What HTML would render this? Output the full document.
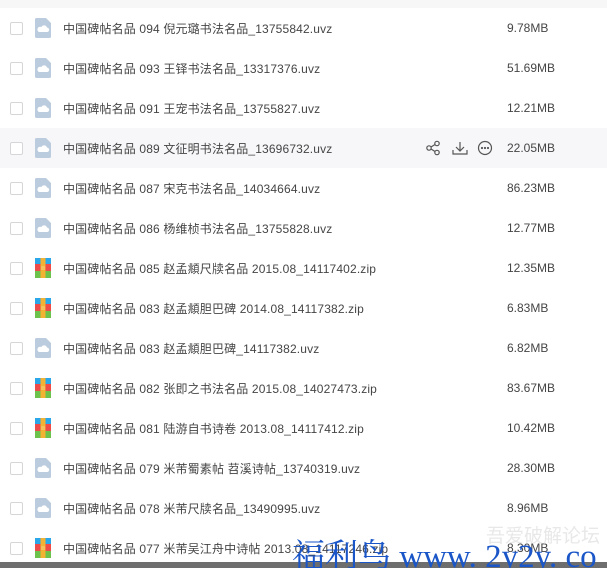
<!DOCTYPE html><html><head><meta charset="utf-8"><style>
html,body{margin:0;width:607px;height:568px;overflow:hidden}
body{background:#fff;font-family:"Liberation Sans","Noto Sans CJK SC",sans-serif;position:relative}
.wrap{position:absolute;left:0;top:0;width:607px;height:568px;overflow:hidden}
.top{position:absolute;left:0;top:0;width:607px;height:8px;background:#f7f7f8}
.row{position:absolute;left:0;width:607px;height:40px}
.row.h{background:#f7f7f9}
.cb{position:absolute;left:10px;top:14px;width:11px;height:11px;border:1px solid #d6d6d8;border-radius:2px;background:#fff}
.ic{position:absolute;left:35px;top:10px;width:16px;height:20px}
.nm{position:absolute;left:63px;top:12px;font-size:12px;color:#454545;white-space:nowrap;letter-spacing:0.15px}
.sz{position:absolute;left:507px;top:13px;font-size:12px;color:#454545}
.acts{position:absolute;left:426px;top:12px}
.bot{position:absolute;left:0;top:562px;width:607px;height:6px;background:#6e6e6e}
.wm{position:absolute;left:292px;top:530px;font-family:"Liberation Serif","Noto Serif CJK SC",serif;font-size:33px;color:#1a56c8;white-space:nowrap}
.wm2{position:absolute;left:486px;top:521px;font-size:19px;color:#e8e8e8;font-family:"Noto Sans CJK SC",sans-serif}
</style></head><body><div class="wrap">
<div class="top"></div>
<svg width="0" height="0" style="position:absolute"><defs>
<g id="uvz"><path d="M0 1.5Q0 0 1.5 0H11L16 5V18.5Q16 20 14.5 20H1.5Q0 20 0 18.5Z" fill="#bcccdf"/><path d="M4 14h8a2.2 2.2 0 0 0 0-4.4 3 3 0 0 0-5.6-.6A2.5 2.5 0 0 0 4 14z" fill="#fff"/></g>
<g id="zip"><rect x="0" y="0" width="16" height="6" fill="#2aa7e8"/><rect x="0" y="6" width="16" height="7" fill="#ef4a4a"/><rect x="0" y="13" width="16" height="7" fill="#6cc24a"/><rect x="5.5" y="0" width="5" height="20" fill="#f2b233"/><rect x="6" y="8" width="4" height="4" fill="#fff3"/></g>
</defs></svg>
<div id="rows"></div>
<script>
var d=[["094 倪元璐书法名品_13755842.uvz","9.78MB",0],["093 王铎书法名品_13317376.uvz","51.69MB",0],["091 王宠书法名品_13755827.uvz","12.21MB",0],["089 文征明书法名品_13696732.uvz","22.05MB",0],["087 宋克书法名品_14034664.uvz","86.23MB",0],["086 杨维桢书法名品_13755828.uvz","12.77MB",0],["085 赵孟頫尺牍名品 2015.08_14117402.zip","12.35MB",1],["083 赵孟頫胆巴碑 2014.08_14117382.zip","6.83MB",1],["083 赵孟頫胆巴碑_14117382.uvz","6.82MB",0],["082 张即之书法名品 2015.08_14027473.zip","83.67MB",1],["081 陆游自书诗卷 2013.08_14117412.zip","10.42MB",1],["079 米芾蜀素帖 苕溪诗帖_13740319.uvz","28.30MB",0],["078 米芾尺牍名品_13490995.uvz","8.96MB",0],["077 米芾吴江舟中诗帖 2013.08_14117246.zip","8.30MB",1]];
var h="";d.forEach(function(r,i){h+='<div class="row'+(i==3?' h':'')+'" style="top:'+(8+i*40)+'px"><div class="cb"></div><svg class="ic" viewBox="0 0 16 20"><use href="#'+(r[2]?'zip':'uvz')+'"/></svg><div class="nm">中国碑帖名品 '+r[0]+'</div>'+(i==3?'<svg class="acts" width="70" height="16" viewBox="0 0 70 16" fill="none" stroke="#555" stroke-width="1.2"><circle cx="3" cy="8" r="2.2"/><circle cx="11" cy="3.5" r="2.2"/><circle cx="11" cy="12.5" r="2.2"/><path d="M5 7l4-2.5M5 9l4 2.5"/><path d="M34 2v9M30 7l4 4 4-4M27 10v4h14v-4"/><circle cx="59" cy="8" r="6.5"/><circle cx="56" cy="8" r=".5" fill="#555"/><circle cx="59" cy="8" r=".5" fill="#555"/><circle cx="62" cy="8" r=".5" fill="#555"/></svg>':'')+'<div class="sz">'+r[1]+'</div></div>'});
document.getElementById("rows").innerHTML=h;
</script>
<div class="wm2">吾爱破解论坛</div>
<div class="bot"></div>
<div class="wm">福利鸟 www. 2y2y. co</div>
</div></body></html>
